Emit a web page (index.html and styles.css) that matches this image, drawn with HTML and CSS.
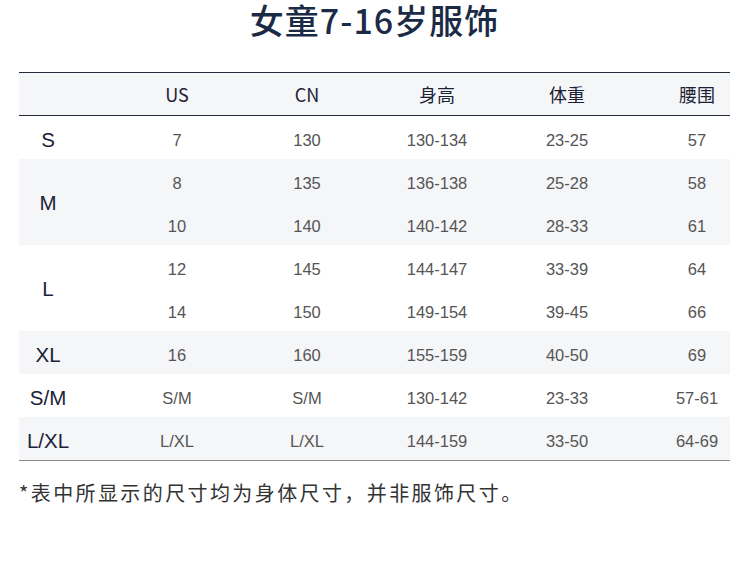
FILE: index.html
```html
<!DOCTYPE html>
<html lang="zh-CN">
<head>
<meta charset="utf-8">
<title>女童7-16岁服饰</title>
<link rel="stylesheet" href="styles.css">
</head>
<body>
<div class="page">
  <h1 class="title">女童7-16岁服饰</h1>
  <table class="size-table">
    <colgroup>
      <col class="c-size"><col class="c-mid"><col class="c-mid"><col class="c-mid"><col class="c-mid"><col class="c-last">
    </colgroup>
    <thead>
      <tr class="head">
        <th class="size"></th><th>US</th><th>CN</th><th>身高</th><th>体重</th><th class="last">腰围</th>
      </tr>
    </thead>
    <tbody>
      <tr>
        <td class="size">S</td><td>7</td><td>130</td><td>130-134</td><td>23-25</td><td class="last">57</td>
      </tr>
      <tr class="alt">
        <td class="size span" rowspan="2">M</td><td>8</td><td>135</td><td>136-138</td><td>25-28</td><td class="last">58</td>
      </tr>
      <tr class="alt">
        <td>10</td><td>140</td><td>140-142</td><td>28-33</td><td class="last">61</td>
      </tr>
      <tr>
        <td class="size span" rowspan="2">L</td><td>12</td><td>145</td><td>144-147</td><td>33-39</td><td class="last">64</td>
      </tr>
      <tr>
        <td>14</td><td>150</td><td>149-154</td><td>39-45</td><td class="last">66</td>
      </tr>
      <tr class="alt">
        <td class="size">XL</td><td>16</td><td>160</td><td>155-159</td><td>40-50</td><td class="last">69</td>
      </tr>
      <tr>
        <td class="size">S/M</td><td>S/M</td><td>S/M</td><td>130-142</td><td>23-33</td><td class="last">57-61</td>
      </tr>
      <tr class="alt">
        <td class="size">L/XL</td><td>L/XL</td><td>L/XL</td><td>144-159</td><td>33-50</td><td class="last">64-69</td>
      </tr>
    </tbody>
  </table>
  <p class="note">*表中所显示的尺寸均为身体尺寸，并非服饰尺寸。</p>
</div>
</body>
</html>
```

FILE: styles.css
```css
html, body {
  margin: 0;
  padding: 0;
  background: #ffffff;
}

.page {
  width: 711px;
  margin-left: 19px;
  font-family: "Liberation Sans", "Noto Sans CJK SC", sans-serif;
}

.title {
  margin: 0;
  height: 72px;
  padding-top: 4px;
  box-sizing: border-box;
  text-align: center;
  font-family: "Noto Sans CJK SC", sans-serif;
  font-weight: 500;
  font-size: 34px;
  line-height: 32px;
  letter-spacing: 1px;
  color: #1b2a45;
}

.size-table {
  width: 711px;
  border-collapse: collapse;
  table-layout: fixed;
}

.c-size { width: 93px; }
.c-mid { width: 130px; }
.c-last { width: 98px; }

.size-table th,
.size-table td {
  padding: 0;
  text-align: center;
  vertical-align: middle;
}

.size-table td.size,
.size-table th.size {
  padding-right: 35px;
}

.size-table td.last,
.size-table th.last {
  padding-left: 32px;
}

.head {
  background: #f5f6f8;
  border-top: 1px solid #252a3a;
  border-bottom: 1px solid #252a3a;
}

.head th {
  height: 42px;
  font-family: "Noto Sans CJK SC", sans-serif;
  font-weight: 400;
  font-size: 18px;
  color: #1b2236;
}

.size-table tbody td {
  height: 38px;
  padding-top: 5px;
  font-size: 16.5px;
  color: #555555;
}

.size-table tbody td.size {
  font-size: 20.5px;
  color: #1b2236;
}

.size-table tbody td.span {
  padding-top: 2px;
}

.size-table tbody tr.alt {
  background: #f5f6f8;
}

.size-table tbody tr:last-child {
  border-bottom: 1px solid #8a8a8a;
}

.note {
  margin: 19px 0 0 0;
  font-family: "Noto Sans CJK SC", sans-serif;
  font-size: 20px;
  line-height: 26px;
  letter-spacing: 2.4px;
  color: #333333;
}
```
